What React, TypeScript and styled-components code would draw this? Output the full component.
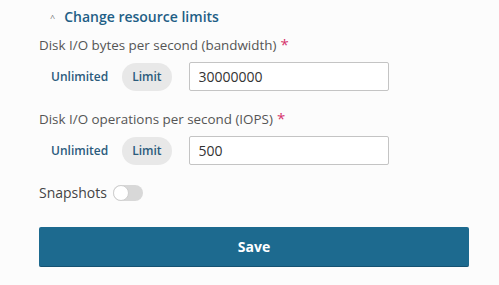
import styled, { createGlobalStyle } from 'styled-components';

const GlobalStyle = createGlobalStyle`
  html, body {
    margin: 0;
    padding: 0;
    background-color: #fcfcfc;
    font-family: 'Open Sans', 'Noto Sans', sans-serif;
  }
`;

const Form = styled.div`
  width: 430px;
  padding: 5px 0 0 39px;
  display: flex;
  flex-direction: column;
`;

const SectionToggle = styled.div`
  display: flex;
  align-items: center;
  gap: 9px;
  padding-left: 11px;
  height: 22px;
  color: #1f5f86;
  font-size: 14px;
  font-weight: 600;
`;

const Caret = styled.span`
  color: #777777;
  font-size: 9px;
  font-weight: 400;
  margin-top: 2px;
`;

const Field = styled.div`
  display: flex;
  flex-direction: column;
  margin-top: 8px;

  & + & {
    margin-top: 18px;
  }
`;

const Label = styled.div`
  font-size: 13.4px;
  color: #555555;
  height: 18px;
  line-height: 18px;
`;

const Required = styled.span`
  color: #d6336c;
  margin-left: 4px;
  font-size: 15px;
`;

const Row = styled.div`
  display: flex;
  align-items: center;
  margin-top: 9px;
  padding-left: 2px;
`;

const Choice = styled.button<{ $active?: boolean }>`
  height: 28px;
  padding: 0 10px;
  border: none;
  border-radius: 14px;
  background-color: ${(p) => (p.$active ? '#e8e8e8' : 'transparent')};
  color: #2b5b7c;
  font-family: inherit;
  font-size: 12px;
  font-weight: 600;
  margin-right: 4px;
`;

const Input = styled.input`
  box-sizing: border-box;
  width: 200px;
  height: 29px;
  margin-left: 13px;
  padding: 0 9px;
  border: 1px solid #c4c4c4;
  border-radius: 2px;
  background: #ffffff;
  font-family: inherit;
  font-size: 14px;
  color: #333333;
`;

const SwitchRow = styled.div`
  display: flex;
  align-items: center;
  gap: 6px;
  margin-top: 18px;
  font-size: 14px;
  color: #444444;
`;

const Track = styled.div`
  position: relative;
  width: 30px;
  height: 16px;
  border-radius: 8px;
  background-color: #d8d8d8;
`;

const Knob = styled.div`
  position: absolute;
  top: 0;
  left: 0;
  width: 14px;
  height: 14px;
  border-radius: 50%;
  background: #ffffff;
  border: 1px solid #cfcfcf;
`;

const SaveButton = styled.button`
  margin-top: 25px;
  height: 40px;
  width: 430px;
  border: none;
  border-bottom: 1px solid #155272;
  border-radius: 2px;
  background-color: #1d6a8f;
  color: #ffffff;
  font-family: inherit;
  font-size: 14px;
  font-weight: 700;
`;

interface LimitFieldProps {
  label: string;
  value: string;
}

const LimitField = ({ label, value }: LimitFieldProps) => (
  <Field>
    <Label>
      {label}
      <Required>*</Required>
    </Label>
    <Row>
      <Choice>Unlimited</Choice>
      <Choice $active>Limit</Choice>
      <Input defaultValue={value} />
    </Row>
  </Field>
);

export default function App() {
  return (
    <>
      <GlobalStyle />
      <Form>
        <SectionToggle>
          <Caret>^</Caret>
          Change resource limits
        </SectionToggle>
        <LimitField label="Disk I/O bytes per second (bandwidth)" value="30000000" />
        <LimitField label="Disk I/O operations per second (IOPS)" value="500" />
        <SwitchRow>
          Snapshots
          <Track>
            <Knob />
          </Track>
        </SwitchRow>
        <SaveButton>Save</SaveButton>
      </Form>
    </>
  );
}
